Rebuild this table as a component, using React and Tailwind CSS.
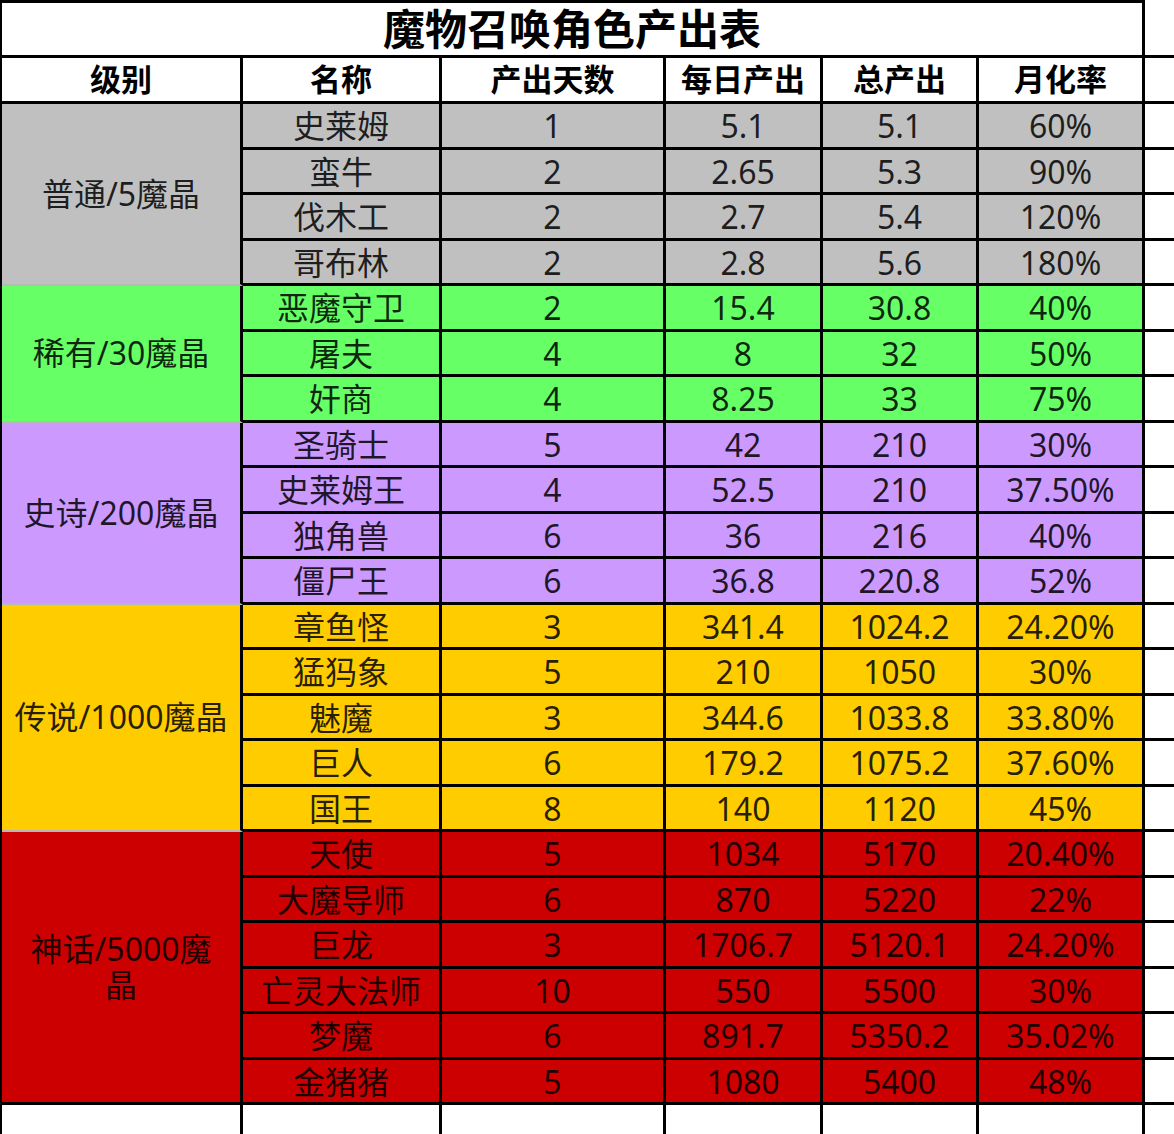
const groups = [
  {
    level: '普通/5魔晶',
    bg: 'bg-[#c0c0c0]',
    rows: [
      ['史莱姆', '1', '5.1', '5.1', '60%'],
      ['蛮牛', '2', '2.65', '5.3', '90%'],
      ['伐木工', '2', '2.7', '5.4', '120%'],
      ['哥布林', '2', '2.8', '5.6', '180%'],
    ],
  },
  {
    level: '稀有/30魔晶',
    bg: 'bg-[#66ff66]',
    rows: [
      ['恶魔守卫', '2', '15.4', '30.8', '40%'],
      ['屠夫', '4', '8', '32', '50%'],
      ['奸商', '4', '8.25', '33', '75%'],
    ],
  },
  {
    level: '史诗/200魔晶',
    bg: 'bg-[#cc99ff]',
    rows: [
      ['圣骑士', '5', '42', '210', '30%'],
      ['史莱姆王', '4', '52.5', '210', '37.50%'],
      ['独角兽', '6', '36', '216', '40%'],
      ['僵尸王', '6', '36.8', '220.8', '52%'],
    ],
  },
  {
    level: '传说/1000魔晶',
    bg: 'bg-[#ffcc00]',
    rows: [
      ['章鱼怪', '3', '341.4', '1024.2', '24.20%'],
      ['猛犸象', '5', '210', '1050', '30%'],
      ['魅魔', '3', '344.6', '1033.8', '33.80%'],
      ['巨人', '6', '179.2', '1075.2', '37.60%'],
      ['国王', '8', '140', '1120', '45%'],
    ],
  },
  {
    level: (
      <>
        神话/5000魔
        <br />晶
      </>
    ),
    bg: 'bg-[#cc0000]',
    last: true,
    rows: [
      ['天使', '5', '1034', '5170', '20.40%'],
      ['大魔导师', '6', '870', '5220', '22%'],
      ['巨龙', '3', '1706.7', '5120.1', '24.20%'],
      ['亡灵大法师', '10', '550', '5500', '30%'],
      ['梦魔', '6', '891.7', '5350.2', '35.02%'],
      ['金猪猪', '5', '1080', '5400', '48%'],
    ],
  },
];

const headers = ['级别', '名称', '产出天数', '每日产出', '总产出', '月化率'];

const rowSpan = {
  3: 'row-span-3',
  4: 'row-span-4',
  5: 'row-span-5',
  6: 'row-span-6',
};

const cell = 'flex items-center justify-center border-r-[3px] border-b-[3px] border-black';

export default function App() {
  return (
    <div
      className="w-[1174px] h-[1134px] overflow-hidden bg-white text-black/85"
      style={{ fontFamily: '"Noto Sans", "Noto Sans CJK SC", sans-serif' }}
    >
      <div className="grid grid-cols-[241px_199px_224px_157px_156px_166px_31px] grid-rows-[58px_46px_repeat(22,45.5px)_40px] border-l-[2px] border-black">
        {/* title */}
        <div className={`${cell} col-span-6 border-t-[3px] text-[42px] font-bold leading-none text-black`}>
          魔物召唤角色产出表
        </div>
        <div className="border-b-[3px] border-black" />

        {/* header */}
        {headers.map((h) => (
          <div key={h} className={`${cell} text-[31px] font-bold leading-none text-black`}>
            {h}
          </div>
        ))}
        <div className="border-b-[3px] border-black" />

        {/* body */}
        {groups.map((g) => (
          <div key={g.bg} className="contents">
            <div
              className={`${rowSpan[g.rows.length]} ${g.bg} flex items-center justify-center text-center border-r-[3px] border-r-black ${
                g.last ? 'border-b-[3px] border-b-black' : 'border-b-[2px] border-b-[#b8b8b8]'
              } text-[32px] leading-[36px]`}
            >
              <span>{g.level}</span>
            </div>
            {g.rows.map((r) => (
              <div key={r[0]} className="contents">
                {r.map((v, i) => (
                  <div key={i} className={`${cell} ${g.bg} pt-[2px] text-[32px] leading-none whitespace-nowrap`}>
                    {v}
                  </div>
                ))}
                <div className="border-b-[3px] border-black" />
              </div>
            ))}
          </div>
        ))}

        {/* trailing empty row */}
        {headers.map((h) => (
          <div key={'e' + h} className="border-r-[3px] border-black" />
        ))}
        <div />
      </div>
    </div>
  );
}
